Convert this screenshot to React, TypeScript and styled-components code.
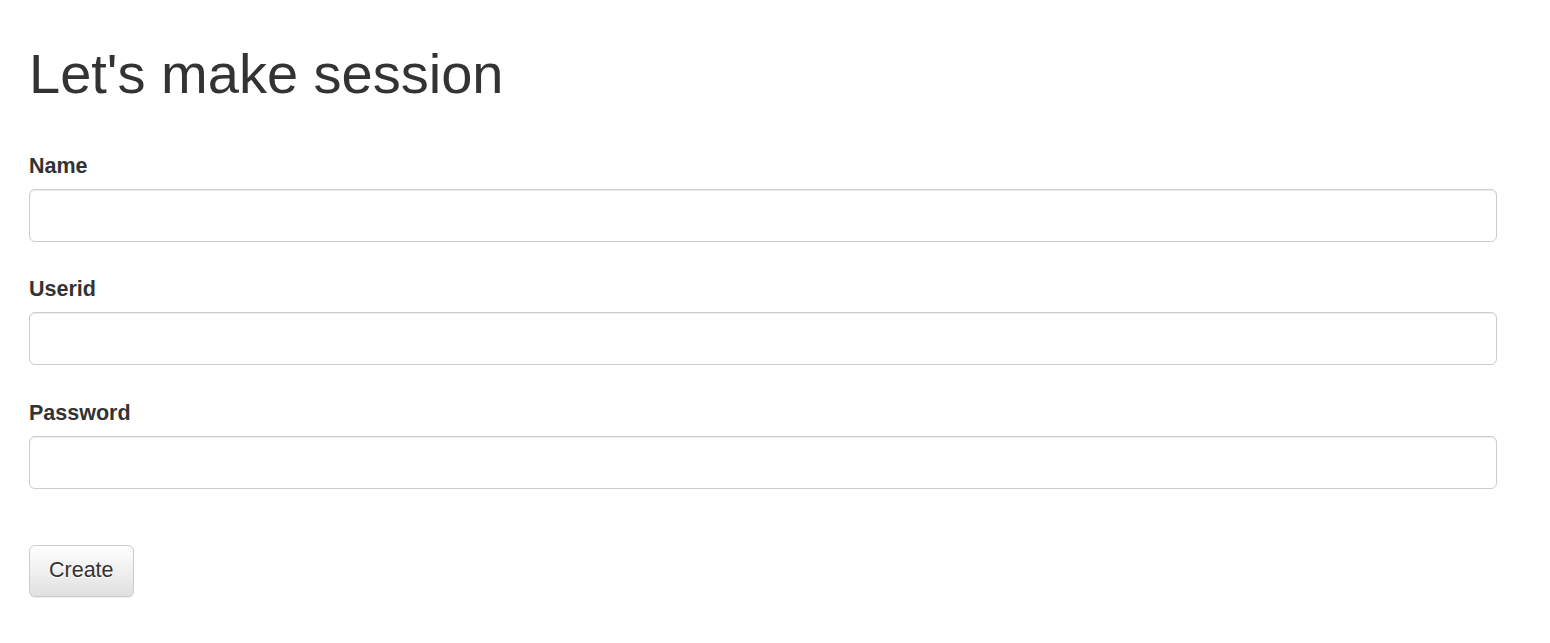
import React from 'react'
import styled, { createGlobalStyle } from 'styled-components'

const GlobalStyle = createGlobalStyle`
  body {
    margin: 0;
    background: #fff;
    color: #333;
    font-family: "Liberation Sans", Arial, Helvetica, sans-serif;
  }
`

const Page = styled.div`
  padding: 43px 53px 40px 29px;
`

const Title = styled.h1`
  margin: 0 0 47px;
  font-size: 56px;
  font-weight: 400;
  line-height: 1.1;
  color: #333;
`

const Form = styled.form`
  display: flex;
  flex-direction: column;
  gap: 33.7px;
`

const Group = styled.div`
  display: flex;
  flex-direction: column;
  gap: 9px;
`

const Label = styled.label`
  font-size: 21.5px;
  font-weight: 700;
  line-height: 28px;
  color: #333;
`

const Input = styled.input`
  box-sizing: border-box;
  width: 100%;
  height: 53px;
  padding: 10px 16px;
  font-size: 20px;
  font-family: inherit;
  color: #555;
  background: #fff;
  border: 1px solid #ccc;
  border-radius: 6px;
  box-shadow: inset 0 1px 1px rgba(0, 0, 0, 0.075);
  outline: none;
`

const Actions = styled.div`
  margin-top: 22px;
`

const Button = styled.button`
  box-sizing: border-box;
  height: 52px;
  padding: 0 19px;
  font-family: inherit;
  font-size: 21.5px;
  color: #333;
  border: 1px solid #ccc;
  border-radius: 6px;
  background-image: linear-gradient(to bottom, #fff 0, #e0e0e0 100%);
  box-shadow: inset 0 1px 0 rgba(255, 255, 255, 0.15), 0 1px 1px rgba(0, 0, 0, 0.075);
  text-shadow: 0 1px 0 #fff;
  cursor: pointer;
`

const fields = [
  { id: 'name', label: 'Name', type: 'text' },
  { id: 'userid', label: 'Userid', type: 'text' },
  { id: 'password', label: 'Password', type: 'password' },
]

const App = () => (
  <Page>
    <GlobalStyle />
    <Title>Let's make session</Title>
    <Form onSubmit={(e) => e.preventDefault()}>
      {fields.map((f) => (
        <Group key={f.id}>
          <Label htmlFor={f.id}>{f.label}</Label>
          <Input id={f.id} type={f.type} />
        </Group>
      ))}
      <Actions>
        <Button type="submit">Create</Button>
      </Actions>
    </Form>
  </Page>
)

export default App
